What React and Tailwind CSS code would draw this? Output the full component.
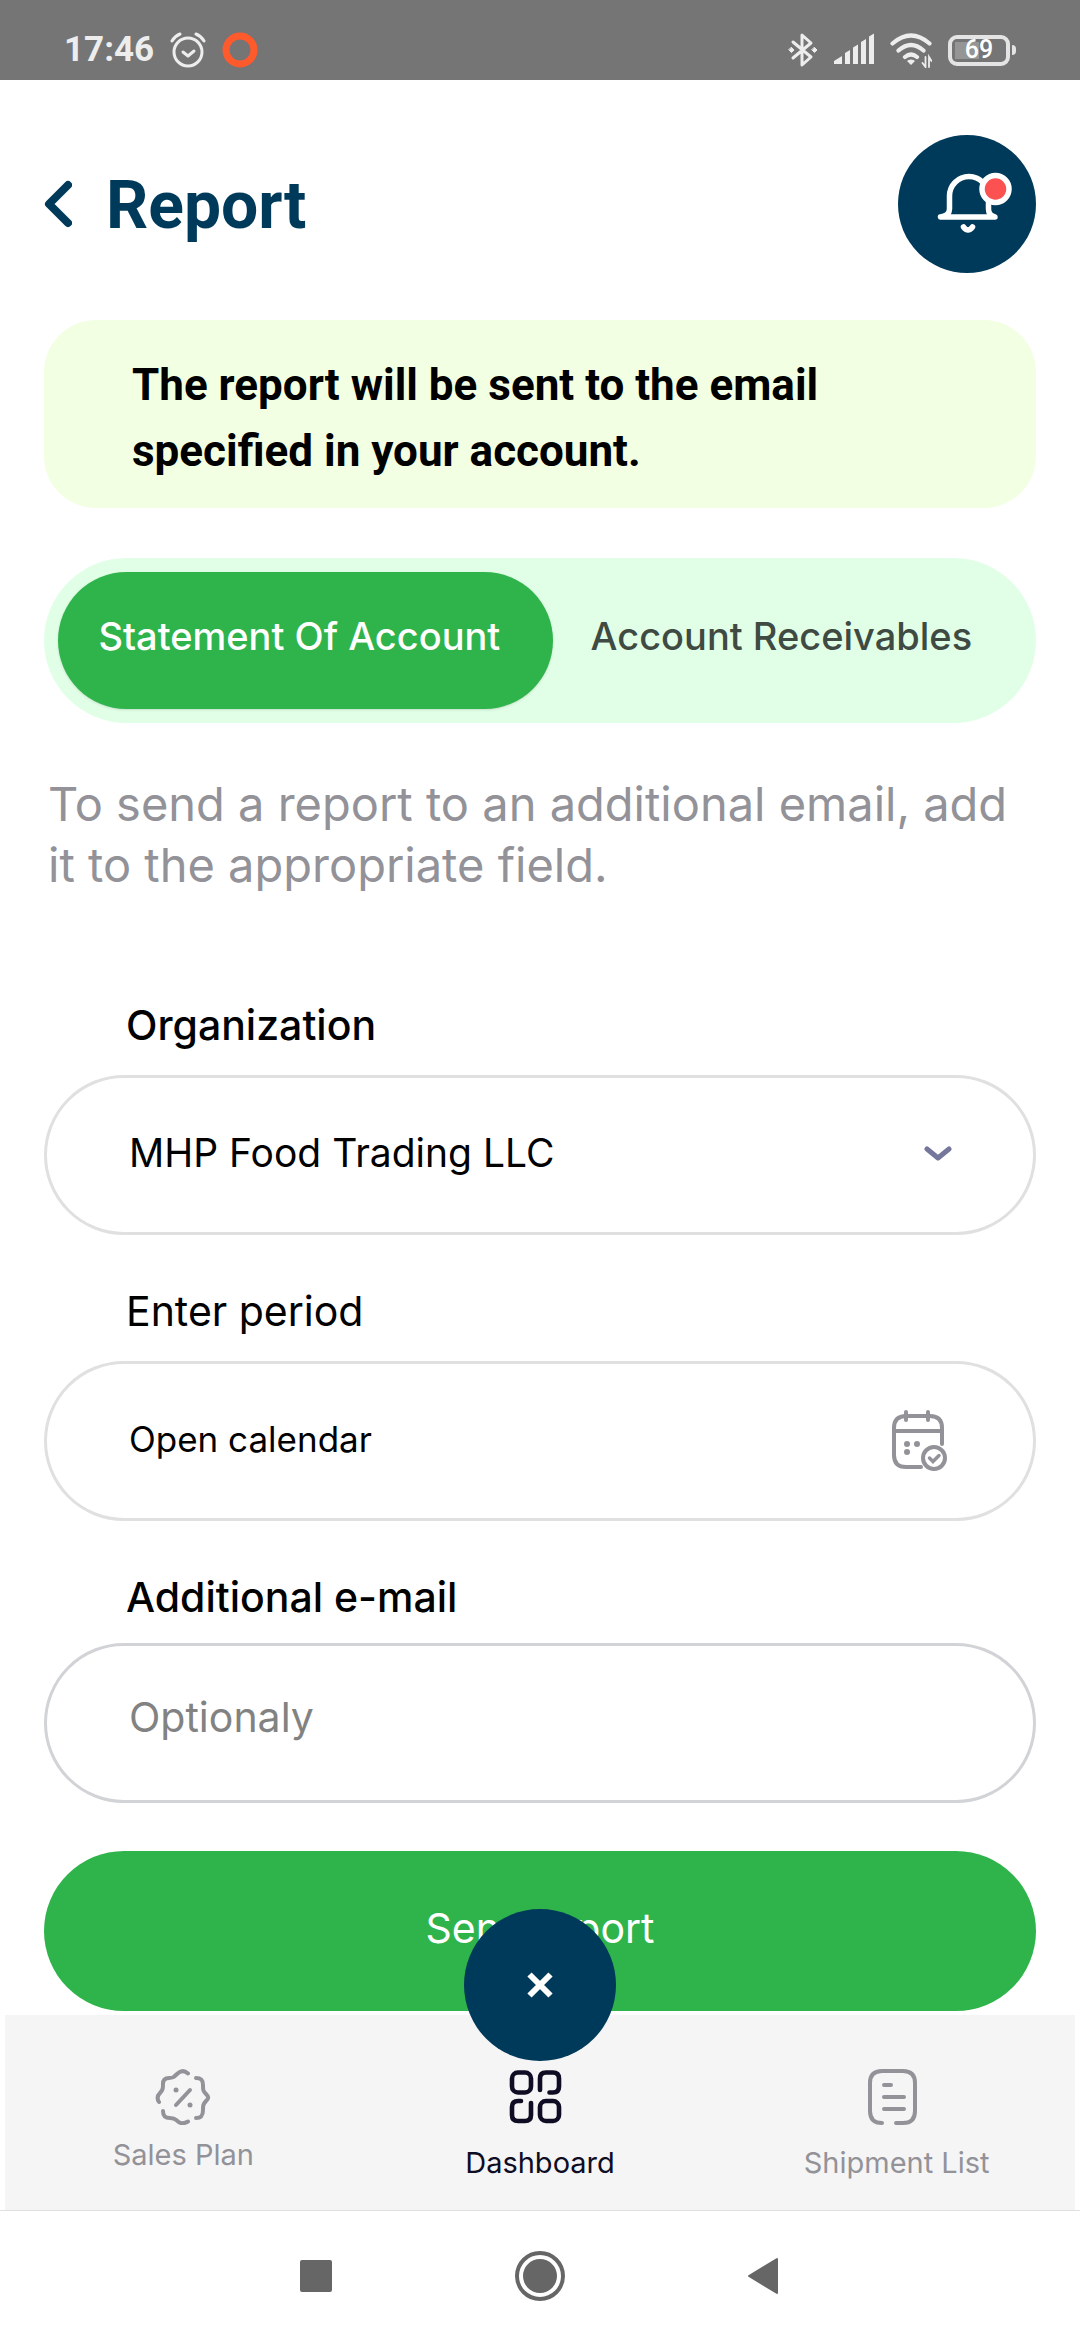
import React, { useState } from 'react';

const inter = "font-['Inter',sans-serif]";
const roboto = "font-['Roboto',sans-serif]";

function StatusBar() {
  return (
    <div className="flex h-20 items-center justify-between bg-[#757575] px-16 pt-5 text-[#ededed]">
      <div className="flex items-center gap-4">
        <span className={`${roboto} text-[35px] leading-10 font-bold`}>17:46</span>
        <svg className="h-9 w-9" viewBox="0 0 36 36" fill="none" stroke="currentColor" strokeLinecap="round" strokeLinejoin="round">
          <circle cx="18" cy="20" r="14" strokeWidth="3" />
          <path d="M13 20l5 4 6-5" strokeWidth="3" />
          <path d="M2 9q3-5 8-7M34 9q-3-5-8-7" strokeWidth="3" />
        </svg>
        <svg className="h-9 w-9" viewBox="0 0 36 36" fill="none" stroke="#ff5a2c">
          <circle cx="18" cy="18" r="14" strokeWidth="7" />
        </svg>
      </div>
      <div className="flex items-center gap-4">
        <svg className="h-9 w-[30px]" viewBox="0 0 30 36" fill="none" stroke="currentColor" strokeWidth="3" strokeLinejoin="round" strokeLinecap="round">
          <path d="M5 10l18 15-9 8V3l9 8L5 26" />
          <path d="M3.500 15.500l2.500 2.500-2.500 2.500L1 18zM26.500 15.500l2.500 2.500-2.500 2.500L24 18z" fill="currentColor" strokeWidth="1" />
        </svg>
        <svg className="h-9 w-10" viewBox="0 0 40 36" fill="currentColor">
          <path d="M0 32v-3l8-5v8zM11 32V21l5-3v14zM19 32V15.500l5-3V32zM27 32V10l5-3v25zM35 32V4.500l5-3V32z" />
        </svg>
        <svg className="h-9 w-[42px]" viewBox="0 0 42 36" fill="none" stroke="currentColor" strokeWidth="4.200" strokeLinecap="round">
          <path d="M2.500 11.500q18.500-16 37 0M8.500 18.500q12.500-11 25 0M15 25q6-5 12 0" />
          <path d="M21 27.500q3 0 4 1.500l-4 4-4-4q1-1.500 4-1.500z" fill="currentColor" stroke="none" />
          <path d="M35.500 25v10l-3-4M39 35V25l2.500 4" strokeWidth="1.800" />
        </svg>
        <div className="flex items-center gap-[2px]">
          <div className="relative flex h-[31px] w-[62px] items-center justify-center rounded-[9px] border-4 border-[#e4e4e4]">
            <div className="absolute top-[3px] bottom-[3px] left-[3px] w-6 bg-[#959595]" />
            <span className={`${roboto} relative text-[25px] leading-6 font-medium text-white`}>69</span>
          </div>
          <div className="h-[10px] w-1 rounded-r-sm bg-[#e4e4e4]" />
        </div>
      </div>
    </div>
  );
}

function BellIcon() {
  return (
    <svg className="h-[100px] w-[100px]" viewBox="-3 -5 100 100" fill="none" stroke="white" strokeWidth="5.500" strokeLinecap="round" strokeLinejoin="round">
      <path d="M20.500 58h54.500c-4-1-6.500-4-6.500-8V37a19.500 19.500 0 0 0-39 0v13c0 4-3 7-9 8z" />
      <path d="M43.500 68q4.500 6 9 0" />
      <circle cx="75.500" cy="30" r="13.500" fill="#fb5151" />
    </svg>
  );
}

function CalendarIcon() {
  return (
    <svg className="h-[62px] w-[56px]" viewBox="0 0 56 62" fill="none" stroke="#929298" strokeWidth="4" strokeLinecap="round">
      <path d="M30 57H15Q3 57 3 45V18Q3 6 15 6h24q12 0 12 12v16" />
      <path d="M3 21h48M15 2v8M37 2v8" />
      <circle cx="43" cy="48" r="11" />
      <path d="M38.500 48l3.500 3.500 6-6" strokeWidth="3.500" />
      <g fill="#929298" stroke="none">
        <circle cx="16" cy="34" r="3" />
        <circle cx="26" cy="34" r="3" />
        <circle cx="16" cy="42" r="3" />
      </g>
    </svg>
  );
}

function SalesIcon() {
  return (
    <svg className="h-[56px] w-[56px]" viewBox="0 0 56 56" fill="none" stroke="currentColor" strokeWidth="4" strokeLinecap="round" strokeLinejoin="round">
      <path d="M33 4.500C29 1 25 2 22 5s-4 4-8 4-6 2-6 6 0 6-3 9-3 6-1 9" />
      <path d="M41 9c5 0 7 2 7 7s0 6 3 9 3 4 0 7-3 5-3 9c0 6-2 8-7 8" />
      <path d="M8 42c0 5 2 7 7 7 5 0 5 1 8 3.500s6 2.500 10 0" />
      <path d="M21 36l14-15" />
      <circle cx="21" cy="21" r="2.500" fill="currentColor" stroke="none" />
      <circle cx="35" cy="36" r="2.500" fill="currentColor" stroke="none" />
    </svg>
  );
}

function DashboardIcon() {
  return (
    <svg className="h-[56px] w-[64px]" viewBox="0 0 64 56" fill="none" stroke="currentColor" strokeWidth="4.600" strokeLinecap="round" strokeLinejoin="round">
      <rect x="4" y="3.500" width="19" height="20" rx="6" />
      <path d="M41.500 23.500H45q6 0 6-6v-8q0-6-6-6h-7q-6 0-6 6V21" />
      <path d="M13 32h-3q-6 0-6 6v8q0 6 6 6h7q6 0 6-6V34" />
      <rect x="32" y="32" width="19" height="20" rx="6" />
    </svg>
  );
}

function ShipmentIcon() {
  return (
    <svg className="h-[56px] w-[60px]" viewBox="0 0 60 56" fill="none" stroke="currentColor" strokeWidth="4" strokeLinecap="round">
      <path d="M15 54q-12 0-12-12V14Q3 2 15 2h21q12 0 12 12v28q0 12-12 12h-7" />
      <path d="M17 16h7M17 28h20M17 40h20" />
    </svg>
  );
}

const navItems = [
  { label: 'Sales Plan', Icon: SalesIcon, active: false, gap: 'gap-3' },
  { label: 'Dashboard', Icon: DashboardIcon, active: true, gap: 'gap-5' },
  { label: 'Shipment List', Icon: ShipmentIcon, active: false, gap: 'gap-5' },
];

export default function App() {
  const [tab, setTab] = useState('statement');
  const [email, setEmail] = useState('');

  const tabClass = (name) =>
    tab === name
      ? 'flex-[19] rounded-full bg-[#2fb44b] pr-3 pb-2 text-white shadow-sm'
      : 'flex-[18] rounded-full pr-3 pb-2 text-[#3f4a42]';

  return (
    <div className={`${inter} flex min-h-screen flex-col bg-white text-black`}>
      <StatusBar />

      <main className="flex flex-col px-11">
        {/* Header */}
        <header className="flex items-center justify-between pt-[55px]">
          <div className="flex items-center gap-[34px]">
            <button type="button" aria-label="Back" className="text-[#003a5a]">
              <svg className="h-12 w-7" viewBox="0 0 28 48" fill="none" stroke="currentColor" strokeWidth="8" strokeLinecap="round" strokeLinejoin="round">
                <path d="M24 5L5 24l19 19" />
              </svg>
            </button>
            <h1 className={`${roboto} pt-1 text-[66px] leading-[72px] font-bold text-[#003a5a]`}>Report</h1>
          </div>
          <button type="button" aria-label="Notifications" className="flex h-[138px] w-[138px] items-center justify-center rounded-full bg-[#003a5a]">
            <BellIcon />
          </button>
        </header>

        <p className={`${roboto} mt-[47px] rounded-[52px] bg-[#f2ffe2] pt-8 pr-40 pb-6 pl-[88px] text-[44px] leading-[66px] font-bold`}>
          The report will be sent to the email specified in your account.
        </p>

        {/* Report type */}
        <div role="tablist" className="mt-[50px] flex h-[165px] rounded-full bg-[#e1ffe7] p-[14px] text-[38px] font-medium">
          <button type="button" role="tab" aria-selected={tab === 'statement'} onClick={() => setTab('statement')} className={tabClass('statement')}>
            Statement Of Account
          </button>
          <button type="button" role="tab" aria-selected={tab === 'receivables'} onClick={() => setTab('receivables')} className={tabClass('receivables')}>
            Account Receivables
          </button>
        </div>

        <p className="mt-[50px] px-1 text-[47px] leading-[61px] text-[#929298]">
          To send a report to an additional email, add it to the appropriate field.
        </p>

        <form className="flex flex-col" onSubmit={(e) => e.preventDefault()}>
          <label htmlFor="organization" className="mt-[100px] px-[82px] text-[41px] leading-[60px] font-medium">Organization</label>
          <div className="relative mt-5">
            <select id="organization" className="h-40 w-full appearance-none rounded-full border-3 border-[#e0e0e0] bg-white px-[82px] pb-1 text-[39px]">
              <option>MHP Food Trading LLC</option>
            </select>
            <svg className="pointer-events-none absolute top-[69px] right-[84px] h-5 w-7" viewBox="0 0 28 20" fill="none" stroke="#75769b" strokeWidth="5" strokeLinecap="round" strokeLinejoin="round">
              <path d="M3 5l11 9 11-9" />
            </svg>
          </div>

          <label htmlFor="period" className="mt-[46px] px-[82px] text-[41px] leading-[60px]">Enter period</label>
          <button id="period" type="button" className="mt-5 flex h-40 items-center justify-between rounded-full border-3 border-[#e0e0e0] pr-[86px] pl-[82px] text-[35px]">
            <span className="pb-1">Open calendar</span>
            <CalendarIcon />
          </button>

          <label htmlFor="email" className="mt-[46px] px-[82px] text-[41px] leading-[60px] font-medium">Additional e-mail</label>
          <input
            id="email"
            type="email"
            value={email}
            onChange={(e) => setEmail(e.target.value)}
            placeholder="Optionaly"
            className="mt-4 h-40 rounded-full border-3 border-[#d1d3d6] px-[82px] pb-3 text-[41px] outline-none placeholder:text-[#828282]"
          />

          <button type="submit" className="mt-12 h-40 rounded-full bg-[#2fb44b] pb-1 text-[41px] text-white">
            Send report
          </button>
        </form>
      </main>

      {/* Bottom navigation */}
      <nav className="relative mx-[5px] mt-1 grid h-[195px] grid-cols-3 bg-[#f5f5f5]">
        {navItems.map(({ label, Icon, active, gap }) => (
          <a key={label} href="#" className={`flex flex-col items-center pt-[54px] text-[29px] leading-9 ${gap} ${active ? 'text-[#0f0d23]' : 'text-[#929298]'}`}>
            <Icon />
            {label}
          </a>
        ))}
        <button type="button" aria-label="Close" className="absolute -top-[106px] left-1/2 flex h-[152px] w-[152px] -translate-x-1/2 items-center justify-center rounded-full bg-[#003a5a]">
          <svg className="h-7 w-7" viewBox="0 0 28 28" fill="none" stroke="white" strokeWidth="6">
            <path d="M3.500 3.500l21 21M24.500 3.500l-21 21" />
          </svg>
        </button>
      </nav>

      {/* System buttons */}
      <div className="flex h-[130px] items-center justify-center border-t border-[#e0e0e0] text-[#666]">
        <div className="flex w-[480px] items-center justify-between">
          <button type="button" aria-label="Recent apps">
            <svg className="h-[54px] w-8" viewBox="0 0 32 54" fill="currentColor"><rect y="11" width="32" height="32" rx="2" /></svg>
          </button>
          <button type="button" aria-label="Home">
            <svg className="h-[54px] w-[54px]" viewBox="0 0 54 54" fill="none" stroke="currentColor">
              <circle cx="27" cy="27" r="23" strokeWidth="4" />
              <circle cx="27" cy="27" r="17" fill="currentColor" stroke="none" />
            </svg>
          </button>
          <button type="button" aria-label="Go back">
            <svg className="h-[54px] w-8" viewBox="0 0 32 54" fill="currentColor" stroke="currentColor" strokeWidth="2" strokeLinejoin="round">
              <path d="M1 27L29 10v34z" />
            </svg>
          </button>
        </div>
      </div>
    </div>
  );
}
